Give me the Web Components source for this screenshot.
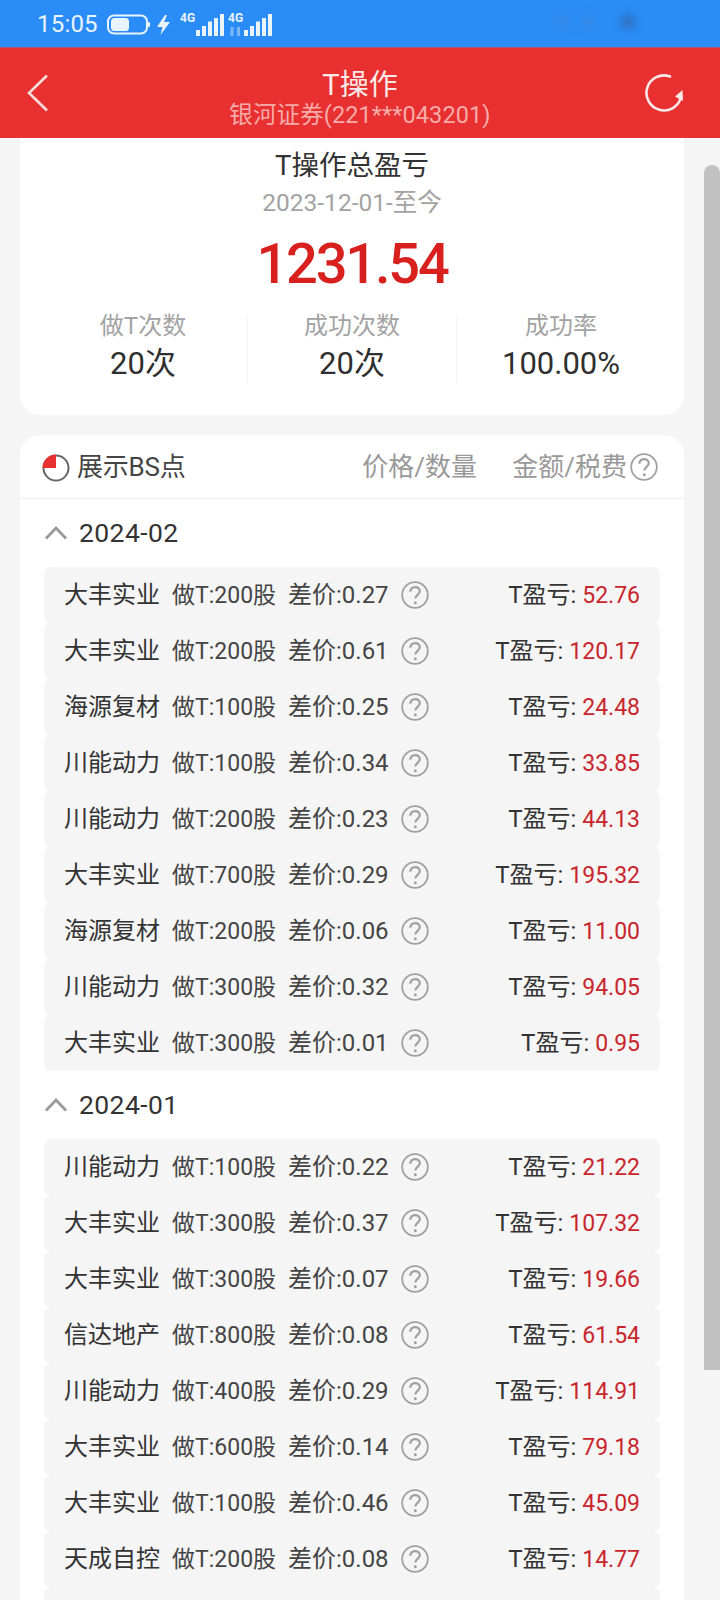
<!DOCTYPE html>
<html lang="zh"><head><meta charset="utf-8"><title>T操作</title>
<style>
html,body{margin:0;padding:0;height:1600px;overflow:hidden;background:#f5f5f5}
body{font-family:Roboto,"Noto Sans CJK SC",sans-serif;color:#333}
</style></head><body>
<app-screen></app-screen>
<script>
const def=(name,css,html,setup)=>{customElements.define(name,class extends HTMLElement{
  connectedCallback(){ if(this.shadowRoot) return; const r=this.attachShadow({mode:'open'});
    r.innerHTML=`<style>${css}</style>`+(typeof html==='function'?html(this):html); setup&&setup(r,this);}
});};
const HELP=`<svg viewBox="0 0 28 28" width="100%" height="100%" fill="none"><circle cx="14" cy="14" r="12.800" stroke="#a0a0a0" stroke-width="1.800"/><path d="M9.300 10.800c0-2.900 2.100-4.700 4.800-4.700s4.700 1.700 4.700 4.200c0 3.500-4.500 3.600-4.500 7.300" stroke="#a0a0a0" stroke-width="2.200"/><circle cx="14.300" cy="21.800" r="1.500" fill="#a0a0a0"/></svg>`;
def('help-icon',':host{display:block;width:28px;height:28px}',HELP);

def('status-bar',`:host{display:flex;align-items:center;height:48px;background:#2a8cf6;color:#eaf4ff;padding-left:37px;box-sizing:border-box;border-bottom:1px solid #a9557f;position:relative;overflow:hidden}
 .t{font-size:24px;line-height:48px;letter-spacing:.2px;width:70px;font-weight:400}
 svg{display:block}
 .g{font:700 12px/12px Roboto,sans-serif;fill:#eaf4ff}
 .blur{position:absolute;left:555px;top:16px;width:90px;height:18px;filter:blur(5px);display:flex;gap:12px}
 .blur i{display:block;width:14px;height:12px;border-radius:50%;background:#4a86cc;opacity:.45}
 .blur i:last-child{background:#35609c;margin-left:14px;opacity:.8}`,
 `<span class="t">15:05</span>
 <svg width="180" height="48" viewBox="0 0 180 48">
  <rect x="1" y="15.500" width="39" height="18" rx="6" fill="none" stroke="#eaf4ff" stroke-width="2"/>
  <rect x="4" y="18" width="18" height="13" rx="3.500" fill="#eaf4ff"/>
  <rect x="41" y="22" width="2" height="5" rx="1" fill="#eaf4ff"/>
  <path d="M58 15 50 27h5.500l-2 8 9.500-13h-6l3-7z" fill="#eaf4ff"/>
  <text x="73" y="22" class="g">4G</text>
  <rect x="89" y="30" width="4" height="6" fill="#eaf4ff"/><rect x="95" y="26" width="4" height="10" fill="#eaf4ff"/><rect x="101" y="21.500" width="4" height="14.500" fill="#eaf4ff"/><rect x="107" y="18" width="4" height="18" fill="#eaf4ff"/><rect x="113" y="14" width="4" height="22" fill="#eaf4ff"/>
  <text x="121" y="22" class="g">4G</text>
  <path d="M125 27v9M131.500 27v9" stroke="#7fb8f5" stroke-width="3"/>
  <rect x="137" y="30" width="4" height="6" fill="#eaf4ff"/><rect x="143" y="26" width="4" height="10" fill="#eaf4ff"/><rect x="149" y="21.500" width="4" height="14.500" fill="#eaf4ff"/><rect x="155" y="18" width="4" height="18" fill="#eaf4ff"/><rect x="161" y="14" width="4" height="22" fill="#eaf4ff"/>
 </svg>
 <div class="blur"><i></i><i></i><i></i></div>`);

def('nav-bar',`:host{display:flex;align-items:center;justify-content:space-between;height:90px;background:#e83030;color:#fff;padding:0 36px 0 27px;box-sizing:border-box}
 .c{text-align:center;flex:1;margin-left:27px;padding-top:11px}
 .a{font-size:29px;line-height:34px;color:#fbe9e9}
 .b{font-size:23.500px;line-height:27px;color:#f6abab;letter-spacing:.1px}`,
 `<svg width="22" height="38" viewBox="0 0 22 38" fill="none"><path d="M20 1.500 2 19l18 17.500" stroke="#fbdcdc" stroke-width="2.600"/></svg>
 <div class="c"><div class="a">T操作</div><div class="b">银河证券(221***043201)</div></div>
 <svg width="40" height="40" viewBox="0 0 40 40" fill="none"><path d="M26 3.500A17.500 17.500 0 1 0 37 24" stroke="#fbe9e9" stroke-width="2.600" stroke-linecap="round"/><path d="M38.500 17 39 28l-8-4.500z" fill="#fbe9e9"/></svg>`);

def('stat-cell',`:host{display:flex;flex-direction:column;align-items:center;flex:1;height:68px;border-left:1px solid #f3f3f3}
 :host(:first-child){border-left:0}
 .l{font-size:24px;line-height:30px;color:#a3a3a3;margin-top:-4px}
 .v{font-size:31px;line-height:38px;color:#2f2f2f;margin-top:4px}`,
 h=>`<div class="l">${h.getAttribute('label')}</div><div class="v">${h.getAttribute('value')}</div>`);

def('summary-card',`:host{display:block;background:#fff;border-radius:0 0 20px 20px;height:277px;box-sizing:border-box;text-align:center;padding-top:12px}
 .a{font-size:27.500px;line-height:32px;color:#333}
 .b{font-size:24.500px;line-height:28px;color:#a3a3a3;margin-top:7px}
 .n{font-size:56px;line-height:60px;font-weight:500;color:#d8201f;letter-spacing:-2.200px;margin-top:17px;height:62px}
 .s{display:flex;padding:0 19px;margin-top:19px}`,
 `<div class="a">T操作总盈亏</div><div class="b">2023-12-01-至今</div><div class="n">1231.54</div>
 <div class="s"><stat-cell label="做T次数" value="20次"></stat-cell><stat-cell label="成功次数" value="20次"></stat-cell><stat-cell label="成功率" value="100.00%"></stat-cell></div>`);

def('list-head',`:host{display:flex;align-items:center;height:63px;border-bottom:1px solid #f1f1f1;padding:0 26px 0 22px;font-size:26px;color:#999}
 span{margin-bottom:5px}
 .t{color:#444;margin-left:7px;flex:1;letter-spacing:-.2px}
 .p{width:150px}.m{letter-spacing:0}
 help-icon{margin-left:3px}`,
 `<svg width="28" height="28" viewBox="0 0 28 28" fill="none" style="margin-top:2px"><circle cx="14" cy="14" r="12.500" stroke="#666" stroke-width="2"/><path d="M14 0.500A13.500 13.500 0 0 0 .5 14H14z" fill="#e83030"/></svg>
 <span class="t">展示BS点</span><span class="p">价格/数量</span><span class="m">金额/税费</span><help-icon></help-icon>`);

def('trade-group',`:host{display:block}
 .h{display:flex;align-items:center;height:67px;padding-left:24px;font-size:26.500px;color:#333;box-sizing:border-box;padding-bottom:2px;letter-spacing:.4px}
 svg{margin-right:11px}
 .rows{padding:0 24px}`,
 h=>`<div class="h"><svg width="24" height="15" viewBox="0 0 24 15" fill="none"><path d="M2 13.500 12 3l10 10.500" stroke="#999" stroke-width="2.800"/></svg>${h.getAttribute('title')}</div><div class="rows"><slot></slot></div>`);

def('trade-row',`:host{display:flex;align-items:center;height:56px;background:#f5f5f5;border-radius:7px;padding:0 20px;box-sizing:border-box;font-size:23px;color:#333}
 span{margin-bottom:5px}
 .n{width:108px;color:#333;font-size:24px}
 .d{width:116px;color:#444}
 .p{width:114px;color:#444;font-size:24px}
 help-icon{margin:0 0 1px -1px}
 .r{margin-left:auto;color:#333;font-size:24px}
 .r b{font-weight:400;color:#c9252c;font-size:23px}`,
 h=>h.hasAttribute('name')?`<span class="n">${h.getAttribute('name')}</span><span class="d">做T:${h.getAttribute('qty')}股</span><span class="p">差价:${h.getAttribute('diff')}</span><help-icon></help-icon><span class="r">T盈亏: <b>${h.getAttribute('pnl')}</b></span>`:'');

def('scroll-rail',`:host{display:block;width:16px;flex:none;background:#f5f5f5;padding-top:27px;box-sizing:border-box}
 i{display:block;height:1205px;background:#c1c1c1;border-radius:8px 8px 0 0}`,'<i></i>');

const row=(n,q,d,p)=>`<trade-row name="${n}" qty="${q}" diff="${d}" pnl="${p}"></trade-row>`;
const feb=[['大丰实业',200,'0.27','52.76'],['大丰实业',200,'0.61','120.17'],['海源复材',100,'0.25','24.48'],['川能动力',100,'0.34','33.85'],['川能动力',200,'0.23','44.13'],['大丰实业',700,'0.29','195.32'],['海源复材',200,'0.06','11.00'],['川能动力',300,'0.32','94.05'],['大丰实业',300,'0.01','0.95']];
const jan=[['川能动力',100,'0.22','21.22'],['大丰实业',300,'0.37','107.32'],['大丰实业',300,'0.07','19.66'],['信达地产',800,'0.08','61.54'],['川能动力',400,'0.29','114.91'],['大丰实业',600,'0.14','79.18'],['大丰实业',100,'0.46','45.09'],['天成自控',200,'0.08','14.77']];

def('app-screen',`:host{display:flex;flex-direction:column;height:1600px;overflow:hidden;background:#f5f5f5}
 .body{display:flex;flex:1;min-height:0}
 main{flex:1;padding:0 20px;min-width:0;overflow:hidden}
 .list{display:block;background:#fff;border-radius:20px 20px 0 0;margin-top:20px;height:1200px}
 .g1{margin-top:1px}
 .g2{margin-top:1px}`,
 `<status-bar></status-bar><nav-bar></nav-bar>
 <div class="body"><main><summary-card></summary-card>
 <div class="list"><list-head></list-head>
 <trade-group class="g1" title="2024-02">${feb.map(a=>row(...a)).join('')}</trade-group>
 <trade-group class="g2" title="2024-01">${jan.map(a=>row(...a)).join('')}<trade-row></trade-row></trade-group>
 </div></main><scroll-rail></scroll-rail></div>`);
</script>
</body></html>
